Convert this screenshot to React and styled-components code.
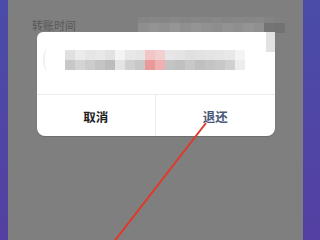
import React from "react";
import styled, { createGlobalStyle } from "styled-components";

const Global = createGlobalStyle`
  html, body {
    margin: 0;
    padding: 0;
    background: #7f7f7f;
  }
  * {
    box-sizing: border-box;
  }
`;

const Screen = styled.div`
  width: 320px;
  height: 240px;
  display: flex;
  position: relative;
  overflow: hidden;
  font-family: "Noto Sans CJK SC", "Noto Sans", sans-serif;
`;

const Strip = styled.div`
  width: ${(p) => p.w}px;
  flex-shrink: 0;
  background: linear-gradient(180deg, #4a4ca8 0%, #5440a2 100%);
`;

const Main = styled.div`
  flex: 1;
  background: #7f7f7f;
  padding: 17px 18px 0 24px;
`;

const FieldRow = styled.div`
  display: flex;
  align-items: center;
  justify-content: space-between;
  height: 16px;
`;

const Label = styled.span`
  font-size: 11px;
  line-height: 16px;
  color: #585858;
`;

const Blur = styled.div`
  display: flex;
  flex-direction: column;
`;

const BlurRow = styled.div`
  display: flex;
  height: ${(p) => p.h}px;
`;

const Cell = styled.div`
  width: ${(p) => p.w || 10}px;
  height: 100%;
  background: ${(p) => p.c};
`;

const Dialog = styled.div`
  position: absolute;
  left: 37px;
  top: 32px;
  width: 238px;
  height: 104px;
  background: #ffffff;
  border-radius: 6px 4px 8px 8px;
  box-shadow: 0 1px 1px rgba(0, 0, 0, 0.15);
  display: flex;
  flex-direction: column;
`;

const Body = styled.div`
  height: 63px;
  display: flex;
  align-items: flex-start;
  padding: 18px 0 0 6px;
  border-bottom: 1px solid #ececec;
  position: relative;
`;

const Paren = styled.div`
  width: 8px;
  height: 22px;
  margin-top: -1px;
  border-left: 2px solid #efefef;
  border-radius: 50% 0 0 50%;
  margin-right: 14px;
`;

const Corner = styled.div`
  position: absolute;
  right: 0;
  top: 0;
  width: 9px;
  height: 20px;
  background: #e2e2e2;
`;

const Actions = styled.div`
  flex: 1;
  display: flex;
`;

const Action = styled.div`
  flex: ${(p) => p.grow};
  display: flex;
  align-items: center;
  justify-content: center;
  font-size: 12.5px;
  font-weight: 700;
  color: ${(p) => p.color};
  border-left: ${(p) => (p.divider ? "1px solid #ececec" : "none")};
  padding-top: 1px;
`;

const Arrow = styled.svg`
  position: absolute;
  left: 0;
  top: 0;
  pointer-events: none;
`;

const valueUpper = ["#858585", "#878787", "#868686", "#888888", "#858585", "#878787", "#868686", "#888888", "#858585", "#878787", "#868686", "#888888", "#838383", "#808080"];
const valueLower = ["#8e8e8e", "#939393", "#909090", "#959595", "#8f8f8f", "#949494", "#909090", "#8d8d8d", "#929292", "#8f8f8f", "#949494", "#909090", "#747474", "#727272"];

const rowTop = ["#e0e0e0", "#ebebeb", "#e6e6e6", "#e8e8e8", "#e2e2e2", "#f4f4f4", "#e8e8e8", "#e6e6e6", "#f2c6c6", "#f2d0d0", "#e6e6e6", "#e4e4e4", "#e0e0e0", "#e2e2e2", "#e4e4e4", "#e6e6e6", "#e8e8e8", "#f4f4f4"];
const rowBottom = ["#c8c8c8", "#d4d4d4", "#cccccc", "#c4c4c4", "#bcbcbc", "#e4e4e4", "#d0d0d0", "#c8c8c8", "#e89a9a", "#eeb0b0", "#c4c4c4", "#c0c0c0", "#c8c8c8", "#c0c0c0", "#c4c4c4", "#c8c8c8", "#d0d0d0", "#ededed"];

export default function App() {
  return (
    <>
      <Global />
      <Screen>
        <Strip w={8} />
        <Main>
          <FieldRow>
            <Label>转账时间</Label>
            <Blur>
              <BlurRow h={6}>
                {valueUpper.map((c, i) => (
                  <Cell key={i} c={c} w={10.5} />
                ))}
              </BlurRow>
              <BlurRow h={10}>
                {valueLower.map((c, i) => (
                  <Cell key={i} c={c} w={10.5} />
                ))}
              </BlurRow>
            </Blur>
          </FieldRow>
        </Main>
        <Strip w={17} />

        <Dialog>
          <Body>
            <Paren />
            <Blur>
              <BlurRow h={10}>
                {rowTop.map((c, i) => (
                  <Cell key={i} c={c} />
                ))}
              </BlurRow>
              <BlurRow h={10}>
                {rowBottom.map((c, i) => (
                  <Cell key={i} c={c} />
                ))}
              </BlurRow>
            </Blur>
            <Corner />
          </Body>
          <Actions>
            <Action grow={118} color="#222222">取消</Action>
            <Action grow={120} color="#4a5878" divider>
              退还
            </Action>
          </Actions>
        </Dialog>

        <Arrow width="320" height="240" viewBox="0 0 320 240">
          <line x1="206" y1="123" x2="113" y2="243" stroke="#e2382a" strokeWidth="2" />
        </Arrow>
      </Screen>
    </>
  );
}
